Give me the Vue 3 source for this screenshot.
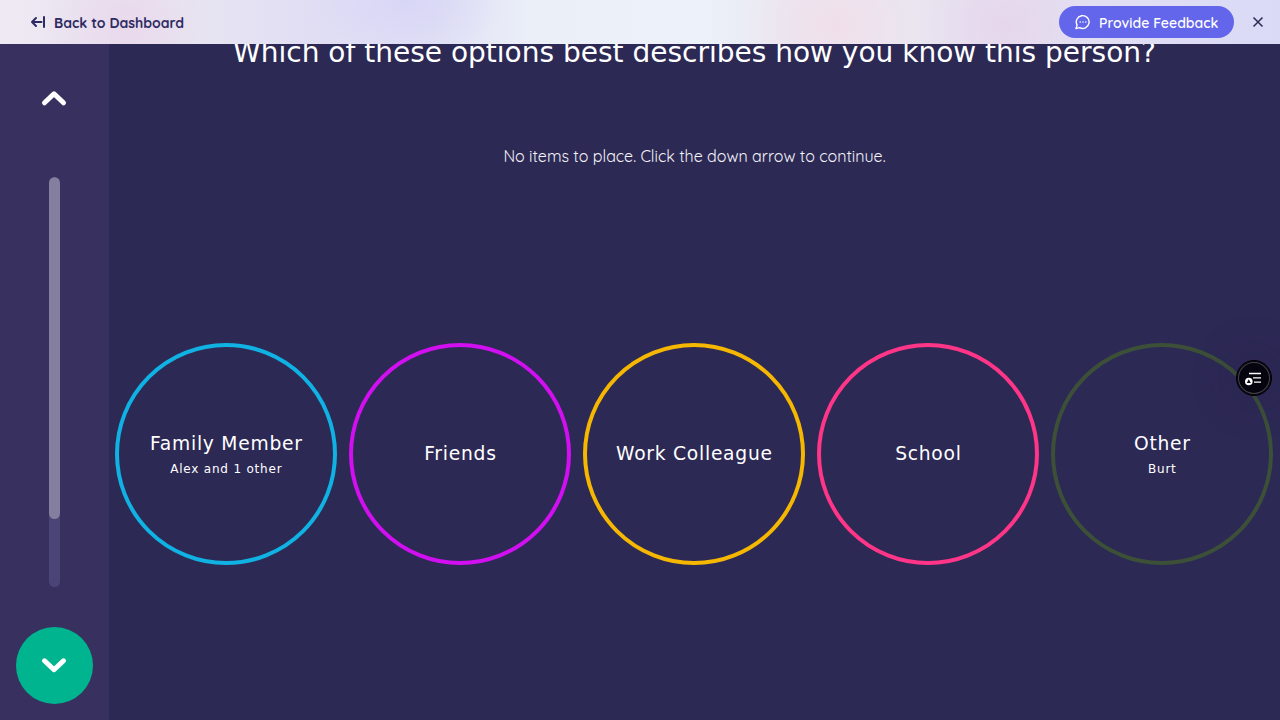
<script setup>
const groups = [
  { name: 'Family Member', people: 'Alex and 1 other', tone: 'blue' },
  { name: 'Friends', tone: 'purple' },
  { name: 'Work Colleague', tone: 'yellow' },
  { name: 'School', tone: 'pink' },
  { name: 'Other', people: 'Burt', tone: 'green' },
]
</script>

<template>
  <div class="app">
    <header class="topbar">
      <a class="back">
        <svg width="16" height="14" viewBox="0 0 16 14"><path d="M6 3 2 7l4 4M2 7h9.5M14 2v10" fill="none" stroke="currentColor" stroke-width="2" stroke-linecap="round" stroke-linejoin="round" /></svg>
        <span>Back to Dashboard</span>
      </a>
      <button class="feedback">
        <svg width="16" height="16" viewBox="0 0 16 16"><path d="M1 14.5 2.1 11.1A6.4 6.4 0 1 1 4.6 13.6Z" fill="none" stroke="#fff" stroke-width="1.4" stroke-linejoin="round" /><path d="M5.2 8h.01M8 8h.01M10.8 8h.01" stroke="#fff" stroke-width="1.6" stroke-linecap="round" /></svg>
        <span>Provide Feedback</span>
      </button>
      <svg class="close" width="12" height="12" viewBox="0 0 12 12"><path d="m1.5 1.5 9 9m0-9-9 9" stroke="#2d2955" stroke-width="1.5" /></svg>
    </header>
    <div class="body">
      <aside class="rail">
        <div class="nav"><svg width="29" height="21" viewBox="0 0 29 21"><path d="m4.5 14.8 9.5-9 9.5 9" /></svg></div>
        <div class="track"><div class="progress"></div></div>
        <div class="nav next"><svg width="29" height="21" viewBox="0 0 29 21"><path d="m4.5 5.8 9.5 9 9.5-9" /></svg></div>
      </aside>
      <main class="stage">
        <h1>Which of these options best describes how you know this person?</h1>
        <p class="hint"><span>No items to place. Click the down arrow to continue.</span></p>
        <div class="groups">
          <div v-for="g in groups" :key="g.name" class="slot">
            <div class="circle" :class="g.tone">
              <div class="name">{{ g.name }}</div>
              <div v-if="g.people" class="people">{{ g.people }}</div>
            </div>
          </div>
        </div>
      </main>
    </div>
    <div class="widget">
      <svg width="18" height="16" viewBox="0 0 18 16">
        <path d="M4 3.5h12M8 7.8h8M9 12.2h7" stroke="#fff" stroke-width="1.3" />
        <circle cx="3.8" cy="11.5" r="3.8" fill="#fff" />
        <path d="m3.8 9.3 2 3.6H1.8Z" fill="#08080f" />
      </svg>
    </div>
  </div>
</template>

<style>
body { margin: 0; overflow: hidden; }
</style>

<style scoped>
.app { position: relative; width: 1280px; height: 720px; overflow: hidden; background: #2d2955; color: #fff; font-family: "DejaVu Sans", sans-serif; }
.topbar {
  position: relative; z-index: 2; box-sizing: border-box; height: 44px; padding: 0 16px 0 30px; display: flex; align-items: center;
  background:
    radial-gradient(ellipse 90px 100px at 125px 24px, #e9d9ec, #e9d9ec00),
    radial-gradient(ellipse 100px 60px at 405px 0, #d8d6f6, #d8d6f600),
    radial-gradient(ellipse 90px 80px at 835px 25px, #f0dfeb, #f0dfeb00),
    radial-gradient(ellipse 90px 80px at 1005px 25px, #e6d6ec, #e6d6ec00),
    linear-gradient(90deg, #eee9f2 0, #e7e5f2 200px, #e1def4 310px, #e0e0f5 430px, #ebeff8 530px, #ecf1fa 700px, #eae8f1 790px, #e9e6f0 920px, #e3dff2 1060px, #dadaf7 1280px);
}
.back { display: flex; align-items: center; gap: 8px; color: #2d2b62; }
.back span, .feedback span { font-family: Quicksand, Lato, sans-serif; font-size: 14px; font-weight: 700; line-height: 18px; white-space: nowrap; }
.back span { width: 132px; padding-top: 2px; }
.feedback { margin: 0 18px 0 auto; width: 175px; height: 32px; padding: 0 0 0 16px; box-sizing: border-box; border: 0; border-radius: 16px; background: #6366eb; color: #fff; display: flex; align-items: center; gap: 8px; }
.feedback span { font-weight: 600; padding-top: 2px; }
.close { display: block; }
.body { display: flex; height: 676px; }
.rail { width: 109px; background: #38315f; display: flex; flex-direction: column; align-items: center; box-sizing: border-box; padding: 16px 0; }
.nav { width: 77px; height: 77px; border-radius: 50%; display: flex; align-items: center; justify-content: center; }
.nav svg { fill: none; stroke: #fff; stroke-width: 5; stroke-linecap: round; stroke-linejoin: round; }
.next { background: #00b48f; }
.track { margin: 40px 0; width: 11px; height: 410px; border-radius: 6px; overflow: hidden; background: #4a4477; }
.progress { height: 342px; border-radius: 6px; background: #847e9f; }
.stage { width: 1171px; display: flex; flex-direction: column; }
h1 { margin: -9px 0 0; height: 36px; line-height: 36px; font-size: 28px; font-weight: 400; text-align: center; white-space: nowrap; }
.hint { margin: 73px 0 0; height: 24px; line-height: 24px; font-family: Quicksand, Lato, sans-serif; font-size: 16px; text-align: center; color: #f4f3f8; }
.groups { margin-top: 175px; display: grid; grid-template-columns: repeat(5, 234px); }
.slot { display: flex; justify-content: center; }
.circle { box-sizing: border-box; width: 222px; height: 222px; border: 4px solid; border-radius: 50%; display: flex; flex-direction: column; align-items: center; justify-content: center; white-space: nowrap; }
.name { color: #fff; font-size: 18.7px; line-height: 26px; letter-spacing: .75px; padding-left: .8px; }
.people { color: #fff; font-size: 12px; line-height: 16px; letter-spacing: .8px; margin-top: 4px; padding-left: .6px; }
.blue { border-color: #0fb2e2; }
.purple { border-color: #d20ff0; }
.yellow { border-color: #f5b700; }
.pink { border-color: #ff3588; }
.green { border-color: #3c5038; }
.widget { position: absolute; z-index: 3; left: 1236px; top: 360px; width: 36px; height: 36px; border-radius: 50%; box-sizing: border-box; border: 1px solid #000; background: #06050f; box-shadow: inset 0 0 0 1px #06050f, inset 0 0 0 2px #44434c, 0 0 36px 12px #201d4530; display: flex; align-items: center; justify-content: center; }
</style>
